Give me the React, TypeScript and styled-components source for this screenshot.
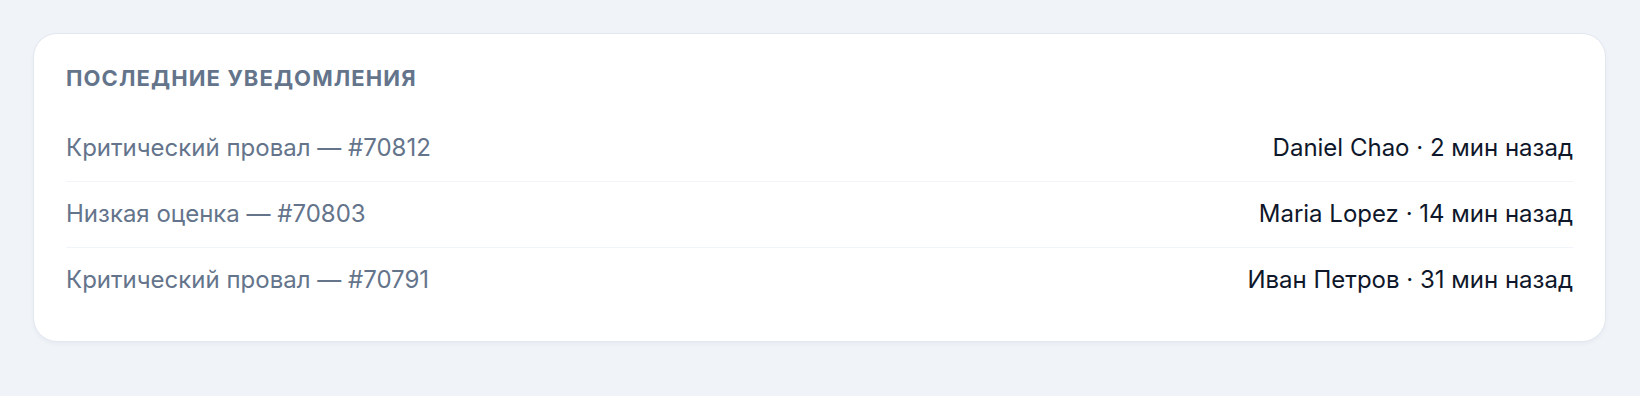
import React from "react";
import styled, { createGlobalStyle } from "styled-components";

const GlobalStyle = createGlobalStyle`
  html, body {
    margin: 0;
    padding: 0;
    background: #f0f4f9;
  }
  body {
    font-family: Inter, "Noto Sans", sans-serif;
  }
`;

const Page = styled.div`
  padding: 33px 34px 33px 33px;
`;

const Card = styled.section`
  background: #ffffff;
  border: 1px solid #e2e8f0;
  border-radius: 24px;
  box-shadow: 0 2px 4px rgba(15, 23, 42, 0.04);
  padding: 31px 32px 28px;
`;

const Title = styled.h2`
  margin: 0 0 25px;
  font-size: 22px;
  font-weight: 700;
  letter-spacing: 0.05em;
  text-transform: uppercase;
  color: #64748b;
  line-height: 26px;
`;

const List = styled.ul`
  list-style: none;
  margin: 0;
  padding: 0;
`;

const Row = styled.li`
  display: flex;
  justify-content: space-between;
  align-items: center;
  padding: 14px 0 16px;
  font-size: 24px;
  line-height: 35px;
  border-bottom: 1px solid #f1f5f9;
  &:last-child {
    border-bottom: none;
  }
`;

const Subject = styled.span`
  color: #64748b;
`;

const Meta = styled.span`
  color: #0f172a;
`;

const items = [
  { subject: "Критический провал — #70812", meta: "Daniel Chao · 2 мин назад" },
  { subject: "Низкая оценка — #70803", meta: "Maria Lopez · 14 мин назад" },
  { subject: "Критический провал — #70791", meta: "Иван Петров · 31 мин назад" },
];

export default function App() {
  return (
    <>
      <GlobalStyle />
      <Page>
        <Card>
          <Title>Последние уведомления</Title>
          <List>
            {items.map((it) => (
              <Row key={it.subject}>
                <Subject>{it.subject}</Subject>
                <Meta>{it.meta}</Meta>
              </Row>
            ))}
          </List>
        </Card>
      </Page>
    </>
  );
}
